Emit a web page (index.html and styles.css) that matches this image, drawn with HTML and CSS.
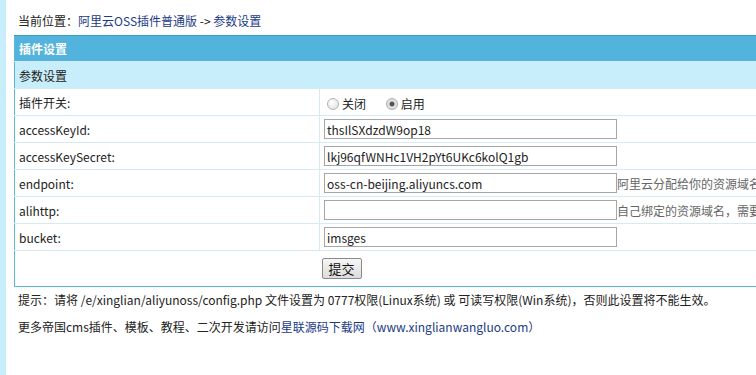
FILE: index.html
```html
<!DOCTYPE html>
<html lang="zh-CN">
<head>
  <meta charset="UTF-8"/>
  <title>参数设置</title>
  <link rel="stylesheet" href="styles.css">
</head>
<body>
  <div class="crumb">当前位置：<a href="#">阿里云OSS插件普通版</a> -&gt; <a href="#">参数设置</a></div>
  <form>
    <table class="setting">
      <tr class="head">
        <td colspan="2">插件设置</td>
      </tr>
      <tr class="sub">
        <td colspan="2">参数设置</td>
      </tr>
      <tr>
        <td class="label">插件开关:</td>
        <td>
          <label class="radio"><input type="radio" name="open" value="0">关闭</label>
          <label class="radio"><input type="radio" name="open" value="1" checked>启用</label>
        </td>
      </tr>
      <tr>
        <td class="label">accessKeyId:</td>
        <td><input type="text" class="text" value="thsIlSXdzdW9op18"></td>
      </tr>
      <tr>
        <td class="label">accessKeySecret:</td>
        <td><input type="text" class="text" value="lkj96qfWNHc1VH2pYt6UKc6kolQ1gb"></td>
      </tr>
      <tr>
        <td class="label">endpoint:</td>
        <td><input type="text" class="text" value="oss-cn-beijing.aliyuncs.com"><span class="hint">阿里云分配给你的资源域名</span></td>
      </tr>
      <tr>
        <td class="label">alihttp:</td>
        <td><input type="text" class="text" value=""><span class="hint">自己绑定的资源域名，需要</span></td>
      </tr>
      <tr>
        <td class="label">bucket:</td>
        <td><input type="text" class="text" value="imsges"></td>
      </tr>
      <tr class="submit">
        <td></td>
        <td><button type="submit">提交</button></td>
      </tr>
    </table>
  </form>
  <p class="tip">提示：请将 /e/xinglian/aliyunoss/config.php 文件设置为 0777权限(Linux系统) 或 可读写权限(Win系统)，否则此设置将不能生效。</p>
  <p class="more">更多帝国cms插件、模板、教程、二次开发请访问<a href="#">星联源码下载网（www.xinglianwangluo.com）</a></p>
</body>
</html>
```

FILE: styles.css
```css
html, body {
  overflow: hidden;
}
body {
  margin: 0;
  padding: 0 0 0 8px;
  border-left: 6px solid #c9eefb;
  min-height: 100vh;
  box-sizing: border-box;
  font-family: "Noto Sans CJK SC", "Noto Sans", sans-serif;
  font-size: 12px;
  color: #222;
  background: #fff;
}
a {
  color: #1b3b86;
  text-decoration: none;
}
.crumb {
  padding: 11px 0 4px 4px;
  line-height: 20px;
}
form {
  margin: 0;
}
.setting {
  width: 800px;
  border-collapse: collapse;
  border: 1px solid #5ab6dc;
}
.setting td {
  height: 26px;
  padding: 0 0 0 4px;
  border-bottom: 1px solid #d6eaf4;
  vertical-align: middle;
}
.setting .label {
  width: 300px;
  border-right: 1px solid #d6eaf4;
}
.head td {
  height: 25px;
  background: #52b3dc;
  border-top: 1px solid #3a9cc4;
  color: #fff;
  font-weight: bold;
}
.sub td {
  height: 26px;
  background: #c8eefb;
}
.radio {
  display: inline-flex;
  align-items: center;
  margin: 4px 14px 0 3px;
}
/* old-style grey radio circles */
.radio input {
  appearance: none;
  -webkit-appearance: none;
  margin: 0 3px 0 0;
  width: 12px;
  height: 12px;
  border: 1px solid #b4b4b4;
  border-radius: 50%;
  background: radial-gradient(circle at 40% 35%, #fff, #dcdcdc);
}
.radio input:checked {
  background: radial-gradient(circle, #555 0, #555 2px, #e6e6e6 3px, #cfcfcf);
}
.text {
  width: 293px;
  height: 20px;
  box-sizing: border-box;
  border: 1px solid #a6a6a6;
  padding: 0 2px;
  font-family: "Noto Sans CJK SC", "Noto Sans", sans-serif;
  font-size: 12px;
  color: #222;
  vertical-align: middle;
}
.hint {
  color: #666;
  white-space: nowrap;
  vertical-align: middle;
}
.submit td {
  height: 35px;
  border-bottom: none;
}
button {
  width: 40px;
  height: 21px;
  margin-left: -2px;
  padding: 0;
  border: 1px solid #8a8a8a;
  border-radius: 2px;
  background: linear-gradient(#f6f6f6, #dcdcdc);
  font-family: "Noto Sans CJK SC", sans-serif;
  font-size: 13px;
  color: #111;
}
.tip {
  margin: 3px 0 0 4px;
  line-height: 20px;
  white-space: nowrap;
}
.more {
  margin: 7px 0 0 4px;
  line-height: 20px;
}
```
